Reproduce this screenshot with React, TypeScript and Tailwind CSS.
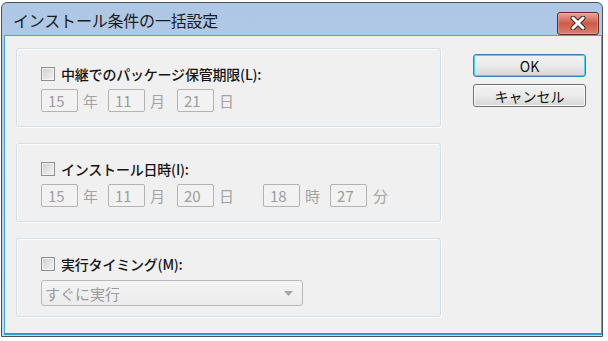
const FONT = "font-['Noto_Sans_CJK_JP','Noto_Sans',sans-serif]"

function CheckBox() {
  return (
    <span className="w-[14px] h-[14px] border border-[#8e8f8f] bg-gradient-to-br from-[#cfcfcf] to-[#f4f4f4] shadow-[inset_0_0_0_1px_#f2f2f2] shrink-0" />
  )
}

function Field({ value }: { value: string }) {
  return (
    <span className="w-[37px] h-[23px] border border-[#b3b3b3] rounded-[2px] bg-[#f2f2f2] flex items-center pl-[6px] text-[15px] leading-none text-[#9d9d9d] shrink-0">
      {value}
    </span>
  )
}

function Unit({ text, className = '' }: { text: string; className?: string }) {
  return <span className={`text-[15px] leading-none text-[#a3a3a3] ml-[5px] ${className}`}>{text}</span>
}

function Group({ label, children }: { label: string; children: React.ReactNode }) {
  return (
    <div className="h-[79px] rounded-[3px] border border-[#d5dfe5] shadow-[inset_1px_1px_0_#fbfbfb,1px_1px_0_#fbfbfb] pl-[24px] pt-[15px]">
      <div className="h-[20px] flex items-center gap-[6px]">
        <CheckBox />
        <span className="text-[14px] leading-none font-medium text-[#151515] tracking-[-0.2px]">{label}</span>
      </div>
      {children}
    </div>
  )
}

export default function App() {
  return (
    <div className={`w-[608px] h-[341px] bg-white pt-[2px] pl-[1px] ${FONT}`}>
      <div className="w-[602px] h-[335px] flex flex-col rounded-t-[6px] border border-[#47525e] bg-gradient-to-b from-[#adc7e5] to-[#c4d8ee]">
        {/* title bar */}
        <div className="h-[32px] shrink-0 flex items-center justify-between pl-[11px] pr-[3px]">
          <span className="text-[16px] leading-none text-[#1c1c1c] tracking-[-0.2px] pt-[2px]">
            インストール条件の一括設定
          </span>
          <div className="mt-[8px] w-[42px] h-[23px] rounded-[3px] border border-[#5b2a2a] bg-gradient-to-b from-[#e6a597] via-[#cf5a49] to-[#d9806e] shadow-[inset_0_0_0_1px_#f0b8aa80] flex items-center justify-center">
            <svg width="18" height="14" viewBox="0 0 18 14">
              <path d="M4 2 L14 12 M14 2 L4 12" stroke="#3d2a2a" strokeWidth="5" strokeLinecap="round" />
              <path d="M4 2 L14 12 M14 2 L4 12" stroke="#ffffff" strokeWidth="3" strokeLinecap="round" />
            </svg>
          </div>
        </div>

        {/* client area */}
        <div className="flex-1 ml-[2px] mb-[1px] border border-[#49a5cf] border-b-2 border-b-[#2f9ac4] bg-[#f0f0f0] flex pl-[11px] pt-[12px]">
          <div className="w-[425px] flex flex-col gap-[16px]">
            <Group label="中継でのパッケージ保管期限(L):">
              <div className="mt-[5px] flex items-center">
                <Field value="15" />
                <Unit text="年" />
                <span className="ml-[10px]"><Field value="11" /></span>
                <Unit text="月" />
                <span className="ml-[12px]"><Field value="21" /></span>
                <Unit text="日" />
              </div>
            </Group>
            <Group label="インストール日時(I):">
              <div className="mt-[5px] flex items-center">
                <Field value="15" />
                <Unit text="年" />
                <span className="ml-[10px]"><Field value="11" /></span>
                <Unit text="月" />
                <span className="ml-[12px]"><Field value="20" /></span>
                <Unit text="日" />
                <span className="ml-[29px]"><Field value="18" /></span>
                <Unit text="時" className="ml-[4px]" />
                <span className="ml-[10px]"><Field value="27" /></span>
                <Unit text="分" className="ml-[6px]" />
              </div>
            </Group>
            <Group label="実行タイミング(M):">
              <div className="mt-[6px] w-[262px] h-[26px] rounded-[3px] border border-[#b9b9b9] bg-gradient-to-b from-[#f4f4f4] to-[#ececec] flex items-center justify-between pl-[3px] pr-[9px]">
                <span className="text-[15px] leading-none text-[#9b9b9b]">すぐに実行</span>
                <svg width="9" height="5" viewBox="0 0 9 5">
                  <path d="M0 0 H9 L4.5 5 Z" fill="#a6a6a6" />
                </svg>
              </div>
            </Group>
          </div>

          <div className="ml-[32px] mt-[6px] w-[113px] flex flex-col gap-[7px]">
            <button className="h-[23px] rounded-[3px] border border-[#3c7fb1] bg-gradient-to-b from-[#f2f2f2] via-[#ebebeb] to-[#d6d6d6] shadow-[inset_0_0_0_1px_#48d3f7] text-[14px] leading-none text-[#111]">
              OK
            </button>
            <button className="h-[23px] rounded-[3px] border border-[#707070] bg-gradient-to-b from-[#f2f2f2] via-[#ebebeb] to-[#d6d6d6] shadow-[inset_0_0_0_1px_#fcfcfc] text-[14px] leading-none text-[#111]">
              キャンセル
            </button>
          </div>
        </div>
      </div>
    </div>
  )
}
